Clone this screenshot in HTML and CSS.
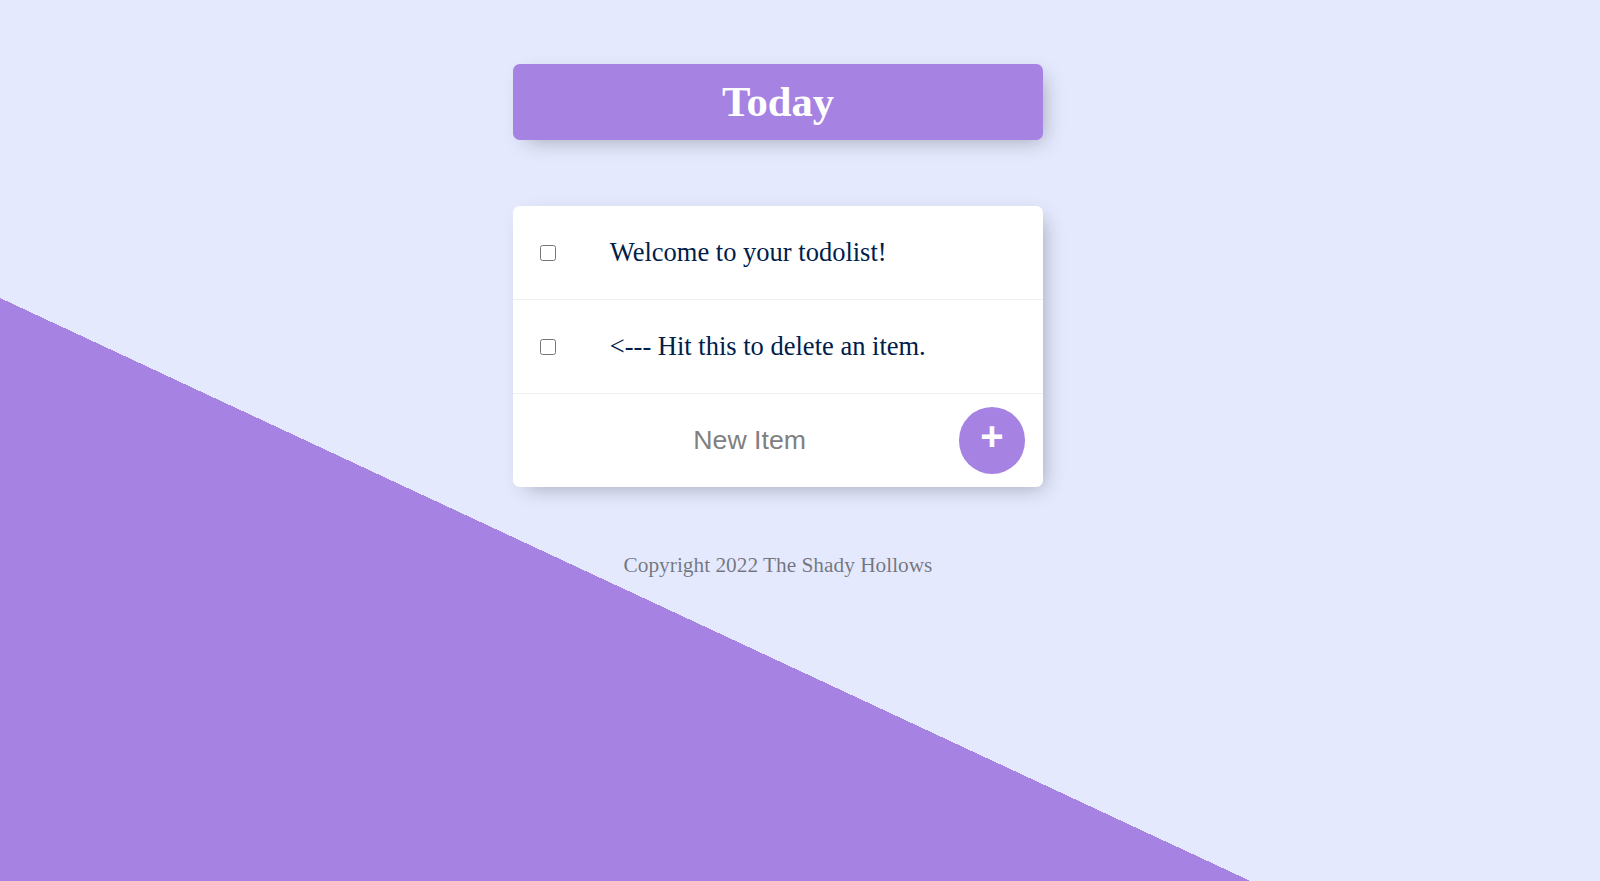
FILE: index.html
```html
<!DOCTYPE html>
<html lang="en">
<head>
<meta charset="utf-8">
<title>To Do List</title>
<link rel="stylesheet" href="styles.css">
</head>
<body>
  <main class="page">
    <div class="box heading">
      <h1 class="title">Today</h1>
    </div>
    <div class="box list">
      <div class="item">
        <input class="check" type="checkbox">
        <p class="item-text">Welcome to your todolist!</p>
      </div>
      <div class="item">
        <input class="check" type="checkbox">
        <p class="item-text">&lt;--- Hit this to delete an item.</p>
      </div>
      <form class="item new-item">
        <input class="new-input" type="text" placeholder="New Item" autocomplete="off">
        <button class="add-btn" type="button">+</button>
      </form>
    </div>
    <footer class="footer">Copyright 2022 The Shady Hollows</footer>
  </main>
</body>
</html>
```

FILE: styles.css
```css
html {
  height: 100%;
  overflow: hidden;
  background-color: #E4E9FD;
  background-image: linear-gradient(25deg, #A683E3 50%, #E4E9FD 50%);
  background-size: 1600px 1342px;
  background-repeat: no-repeat;
  background-position: 0 0;
}

body {
  margin: 0;
  padding: 0 44px 0 0;
  font-family: "Liberation Serif", "Times New Roman", serif;
}

.page {
  display: flex;
  flex-direction: column;
  align-items: center;
  padding-top: 64px;
}

.box {
  width: 530px;
  background: #ffffff;
  border-radius: 6.67px;
  box-shadow: 6.67px 6.67px 20px -6.67px rgba(0, 0, 0, 0.3);
}

.heading {
  background-color: #A683E3;
  text-align: center;
}

.title {
  margin: 0;
  padding: 13px;
  font-size: 42.67px;
  line-height: 50px;
  font-weight: bold;
  color: #ffffff;
}

.list {
  margin-top: 66px;
}

.item {
  min-height: 93px;
  display: flex;
  align-items: center;
  border-bottom: 1px solid #F1F1F1;
}

.item:last-child {
  border-bottom: 0;
}

.check {
  width: 16px;
  height: 16px;
  margin: 0 27.5px 0 26.67px;
  flex: none;
}

.item-text {
  margin: 0;
  padding: 26.67px;
  font-size: 26.5px;
  font-weight: 200;
  color: #00204a;
}

.new-item {
  margin: 0 0 0 26.67px;
}

.new-input {
  width: 366px;
  height: 80px;
  box-sizing: content-box;
  padding: 0 3px 0 27px;
  border: none;
  outline: none;
  text-align: center;
  font-family: "Liberation Sans", Arial, sans-serif;
  font-size: 26.67px;
  font-weight: 200;
  background: transparent;
}

.new-input::placeholder {
  color: grey;
  opacity: 1;
}

.add-btn {
  margin-left: 23px;
  width: 66.67px;
  height: 66.67px;
  flex: none;
  border-radius: 50%;
  border: 0;
  background-color: #A683E3;
  color: #ffffff;
  font-family: "Liberation Sans", Arial, sans-serif;
  font-size: 40px;
  font-weight: bold;
  line-height: 1;
  padding: 0 0 9px 0;
}

.footer {
  margin-top: 66px;
  font-size: 21.33px;
  color: rgba(0, 0, 0, 0.5);
  text-align: center;
}
```
